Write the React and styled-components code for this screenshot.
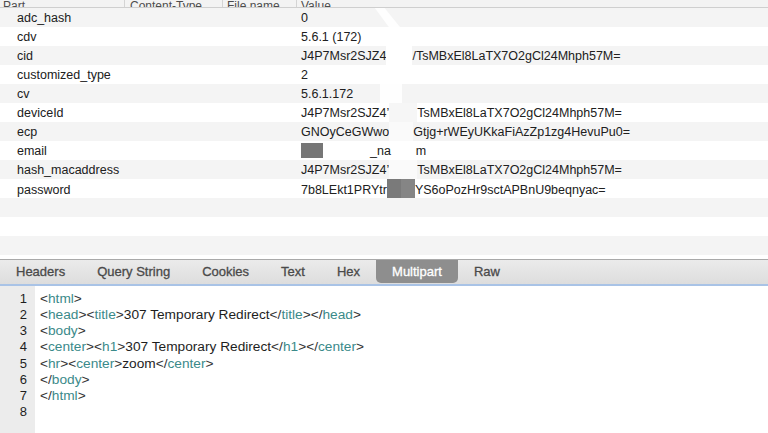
import React from "react";
import styled, { createGlobalStyle } from "styled-components";

const GlobalStyle = createGlobalStyle`
  html, body { margin: 0; padding: 0; background: #ffffff; overflow: hidden; }
  body { font-family: "Liberation Sans", Arial, sans-serif; }
`;

const Page = styled.div`
  width: 768px;
  height: 433px;
  display: flex;
  flex-direction: column;
  overflow: hidden;
  background: #ffffff;
`;

const TableArea = styled.div`
  position: relative;
  height: 259px;
  display: flex;
  flex-direction: column;
  flex-shrink: 0;
`;

const cols = "125px 98px 74px 1fr";

const HeaderRow = styled.div`
  display: grid;
  grid-template-columns: ${cols};
  height: 7px;
  border-bottom: 1px solid #cfcfcf;
  background: #f3f3f3;
  overflow: hidden;
`;

const HeaderCell = styled.div`
  display: flex;
  align-items: flex-end;
  padding: 0 0 2px ${(p) => p.$pad}px;
  font-size: 12px;
  line-height: 12px;
  color: #4d4d4d;
  border-right: ${(p) => (p.$last ? "none" : "1px solid #d4d4d4")};
  white-space: nowrap;
`;

const Row = styled.div`
  display: grid;
  grid-template-columns: ${cols};
  height: 19px;
  background: ${(p) => (p.$striped ? "#f4f4f4" : "#ffffff")};
  font-size: 12.5px;
  color: #202020;
  flex-shrink: 0;
`;

const PartCell = styled.div`
  padding-left: 17px;
  display: flex;
  align-items: center;
  white-space: nowrap;
`;

const EmptyCell = styled.div``;

const ValueCell = styled.div`
  padding-left: 4px;
  display: flex;
  align-items: center;
  white-space: pre;
`;

const Seg = styled.span`
  display: inline-block;
`;

const Gap = styled.span`
  display: inline-block;
  flex-shrink: 0;
  width: ${(p) => p.$w}px;
  height: ${(p) => p.$h || 19}px;
  align-self: ${(p) => (p.$h ? "center" : "stretch")};
  background: ${(p) =>
    p.$tone === "gray"
      ? "linear-gradient(90deg, #7a7a7a 0 50%, #858585 50% 100%)"
      : p.$tone === "dark"
      ? "#767676"
      : p.$tone === "white"
      ? "#ffffff"
      : p.$tone === "light"
      ? "#fafafa"
      : p.$tone === "haze"
      ? "#f6f6f6"
      : "transparent"};
`;

const Smudge = styled.div`
  position: absolute;
  left: ${(p) => p.$x}px;
  top: ${(p) => p.$y}px;
  width: ${(p) => p.$w}px;
  height: ${(p) => p.$h}px;
  background: rgba(255, 255, 255, 0.85);
  clip-path: ${(p) => p.$clip || "none"};
  pointer-events: none;
`;

const TabBar = styled.div`
  height: 24px;
  border-top: 1px solid #a9a9a9;
  border-bottom: 2px solid #a9c3e6;
  background: linear-gradient(#ebebeb, #dddddd);
  display: flex;
  align-items: stretch;
  flex-shrink: 0;
`;

const Tab = styled.div`
  padding: 0 16px;
  display: flex;
  align-items: center;
  font-size: 13px;
  color: ${(p) => (p.$active ? "#ffffff" : "#4a4a4a")};
  background: ${(p) => (p.$active ? "#8e8e8e" : "transparent")};
  border-radius: 0 0 5px 5px;
  margin-bottom: 1px;
  -webkit-text-stroke: 0.3px ${(p) => (p.$active ? "#ffffff" : "#4a4a4a")};
`;

const Editor = styled.div`
  flex: 1;
  display: flex;
  font-size: 13.7px;
  line-height: 16.15px;
`;

const Gutter = styled.div`
  width: 35px;
  background: #ececec;
  padding-top: 5px;
  display: flex;
  flex-direction: column;
  align-items: flex-end;
  padding-right: 8px;
  box-sizing: border-box;
  color: #1e1e1e;
  font-size: 13px;
`;

const Code = styled.div`
  padding: 5px 0 0 5px;
  color: #1e1e1e;
  white-space: pre;
`;

const Line = styled.div``;

const Tag = styled.span`
  color: #3b8a8a;
`;

const Punct = styled.span`
  color: #333333;
`;

const rows = [
  { part: "adc_hash", value: [["t", "0"]] },
  { part: "cdv", value: [["t", "5.6.1 (172)"]] },
  { part: "cid", value: [["t", "J4P7Msr2SJZ4"], ["g", 26, "white"], ["t", "/TsMBxEl8LaTX7O2gCl24Mhph57M="]] },
  { part: "customized_type", value: [["t", "2"]] },
  { part: "cv", value: [["t", "5.6.1.172"]] },
  { part: "deviceId", value: [["t", "J4P7Msr2SJZ4\u2019"], ["g", 28, "haze"], ["t", "TsMBxEl8LaTX7O2gCl24Mhph57M="]] },
  { part: "ecp", value: [["t", "GNOyCeGWwo"], ["g", 24, "light"], ["t", "Gtjg+rWEyUKkaFiAzZp1zg4HevuPu0="]] },
  { part: "email", value: [["g", 22, "dark", 15], ["g", 47, "none"], ["t", "_na"], ["g", 25, "none"], ["t", "m"]] },
  { part: "hash_macaddress", value: [["t", "J4P7Msr2SJZ4\u2019"], ["g", 28, "light"], ["t", "TsMBxEl8LaTX7O2gCl24Mhph57M="]] },
  { part: "password", value: [["t", "7b8LEkt1PRYtr"], ["g", 28, "gray", 21], ["t", "YS6oPozHr9sctAPBnU9beqnyac="]] },
];

const code = [
  [["p", "<"], ["k", "html"], ["p", ">"]],
  [["p", "<"], ["k", "head"], ["p", "><"], ["k", "title"], ["p", ">"], ["x", "307 Temporary Redirect"], ["p", "</"], ["k", "title"], ["p", "></"], ["k", "head"], ["p", ">"]],
  [["p", "<"], ["k", "body"], ["p", ">"]],
  [["p", "<"], ["k", "center"], ["p", "><"], ["k", "h1"], ["p", ">"], ["x", "307 Temporary Redirect"], ["p", "</"], ["k", "h1"], ["p", "></"], ["k", "center"], ["p", ">"]],
  [["p", "<"], ["k", "hr"], ["p", "><"], ["k", "center"], ["p", ">"], ["x", "zoom"], ["p", "</"], ["k", "center"], ["p", ">"]],
  [["p", "</"], ["k", "body"], ["p", ">"]],
  [["p", "</"], ["k", "html"], ["p", ">"]],
  [],
];

const tabs = ["Headers", "Query String", "Cookies", "Text", "Hex", "Multipart", "Raw"];

export default function App() {
  return (
    <>
      <GlobalStyle />
      <Page>
        <TableArea>
          <HeaderRow>
            <HeaderCell $pad={3}>Part</HeaderCell>
            <HeaderCell $pad={5}>Content-Type</HeaderCell>
            <HeaderCell $pad={4}>File name</HeaderCell>
            <HeaderCell $pad={4} $last>Value</HeaderCell>
          </HeaderRow>
          {rows.map((r, i) => (
            <Row key={r.part} $striped={i % 2 === 0}>
              <PartCell>{r.part}</PartCell>
              <EmptyCell />
              <EmptyCell />
              <ValueCell>
                {r.value.map((s, j) =>
                  s[0] === "t" ? (
                    <Seg key={j}>{s[1]}</Seg>
                  ) : (
                    <Gap key={j} $w={s[1]} $tone={s[2]} $h={s[3]} />
                  )
                )}
              </ValueCell>
            </Row>
          ))}
          {[0, 1, 2].map((i) => (
            <Row key={"e" + i} $striped={i % 2 === 0}>
              <EmptyCell />
              <EmptyCell />
              <EmptyCell />
              <EmptyCell />
            </Row>
          ))}
          <Smudge $x={372} $y={8} $w={28} $h={19} $clip="polygon(10% 0, 45% 0, 100% 100%, 60% 100%)" />
          <Smudge $x={380} $y={84} $w={22} $h={19} />
        </TableArea>
        <TabBar>
          {tabs.map((t) => (
            <Tab key={t} $active={t === "Multipart"}>
              {t}
            </Tab>
          ))}
        </TabBar>
        <Editor>
          <Gutter>
            {code.map((_, i) => (
              <Line key={i}>{i + 1}</Line>
            ))}
          </Gutter>
          <Code>
            {code.map((parts, i) => (
              <Line key={i}>
                {parts.length === 0
                  ? "\u00a0"
                  : parts.map((p, j) =>
                      p[0] === "k" ? (
                        <Tag key={j}>{p[1]}</Tag>
                      ) : p[0] === "p" ? (
                        <Punct key={j}>{p[1]}</Punct>
                      ) : (
                        <span key={j}>{p[1]}</span>
                      )
                    )}
              </Line>
            ))}
          </Code>
        </Editor>
      </Page>
    </>
  );
}
